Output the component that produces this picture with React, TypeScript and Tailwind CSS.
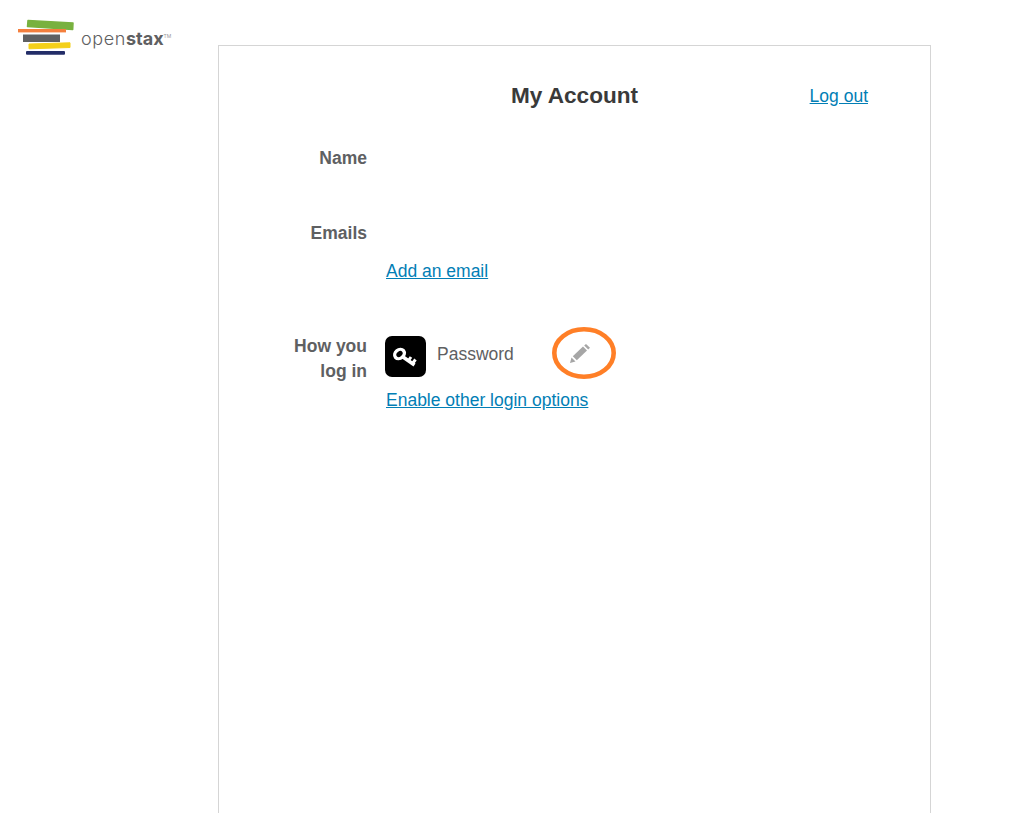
function Logo() {
    return (
        <div className="flex items-center gap-[7px] pl-[18px] pt-[19px]">
            <svg width="56" height="37" viewBox="0 0 56 37" className="shrink-0">
                <path d="M10 1.5 L55 4 L54.7 10.5 L9.5 7.5 Z" fill="#78b13f" stroke="#78b13f" strokeWidth="1.5" strokeLinejoin="round" />
                <rect x="0" y="10" width="48" height="3.4" fill="#f47f3e" />
                <rect x="5" y="15.5" width="37" height="7.5" fill="#5f6062" />
                <path d="M11 25 L52 23.8 L52 28.5 L11 29.8 Z" fill="#f4d019" stroke="#f4d019" strokeLinejoin="round" />
                <rect x="8" y="32" width="39" height="3.8" rx="1" fill="#232d68" />
            </svg>
            <div className="flex items-start font-['Inter',sans-serif] text-[18px] leading-none text-[#5f6062] mt-[3px]">
                <span className="font-light tracking-[0.6px]">open</span>
                <span className="font-bold">stax</span>
                <span className="text-[5px] leading-[5px] mt-[4px] text-[#9a9a9a]">TM</span>
            </div>
        </div>
    );
}

function KeyTile() {
    return (
        <div className="w-[41px] h-[41px] rounded-[7px] bg-black shrink-0">
            <svg width="41" height="41" viewBox="0 0 41 41" fill="none">
                <ellipse cx="14.5" cy="18" rx="5.2" ry="4.2" stroke="#fff" strokeWidth="3.4" transform="rotate(-40 14.5 18)" />
                <path d="M18 21 L29.5 29" stroke="#fff" strokeWidth="3.6" />
                <path d="M23.5 24.5 L26 21 M27.5 27.5 L30.5 23.5" stroke="#fff" strokeWidth="3" />
            </svg>
        </div>
    );
}

export default function App() {
    return (
        <div className="h-[813px] overflow-hidden bg-white flex font-['Liberation_Sans',Arial,sans-serif] text-[17.5px] text-[#5e6062]">
            <div className="w-[218px] shrink-0">
                <Logo />
            </div>
            <main className="w-[713px] mt-[45px] border border-b-0 border-[#d5d5d5] shrink-0">
                <div className="relative pt-[35px] h-[78px]">
                    <h1 className="text-center text-[22.6px] leading-[30px] font-bold text-[#3a3a3a]">My Account</h1>
                    <a href="#" className="absolute right-[62px] top-[38px] leading-[24px] text-[#027eb5] underline">Log out</a>
                </div>

                <div className="grid grid-cols-[148px_1fr] gap-x-[19px]">
                    <div className="text-right font-bold leading-[25px] pt-[22px]">Name</div>
                    <div className="h-[75px]"></div>

                    <div className="text-right font-bold leading-[25px] pt-[22px]">Emails</div>
                    <div className="pt-[60px] h-[137px] leading-[25px]">
                        <a href="#" className="text-[#027eb5] underline">Add an email</a>
                    </div>

                    <div className="text-right font-bold leading-[25px] -mt-[2px]">How you<br />log in</div>
                    <div>
                        <div className="flex items-center h-[41px] -ml-px">
                            <KeyTile />
                            <span className="ml-[11px] w-[133px] leading-[25px] -mt-[4px]">Password</span>
                            <span className="relative w-[20px] h-[20px] -mt-[6px]">
                                <svg width="20" height="20" viewBox="0 0 20 20" fill="#a6a6a6">
                                    <path d="M0 19 L1.5 13.5 L5.5 17.5 Z" />
                                    <path d="M2.8 12.2 L13 2.6 L17 6.6 L6.8 16.2 Z" />
                                    <path d="M14.2 1.5 L16 0 L20 3.8 L18.2 5.4 Z" />
                                </svg>
                                <svg width="64" height="52" viewBox="0 0 64 52" fill="none" className="absolute -left-[18px] -top-[17px]">
                                    <ellipse cx="32" cy="26" rx="29.7" ry="23.7" stroke="#ff7f27" strokeWidth="4.6" />
                                </svg>
                            </span>
                        </div>
                        <div className="mt-[11px] leading-[25px]">
                            <a href="#" className="text-[#027eb5] underline">Enable other login options</a>
                        </div>
                    </div>
                </div>
            </main>
        </div>
    );
}
